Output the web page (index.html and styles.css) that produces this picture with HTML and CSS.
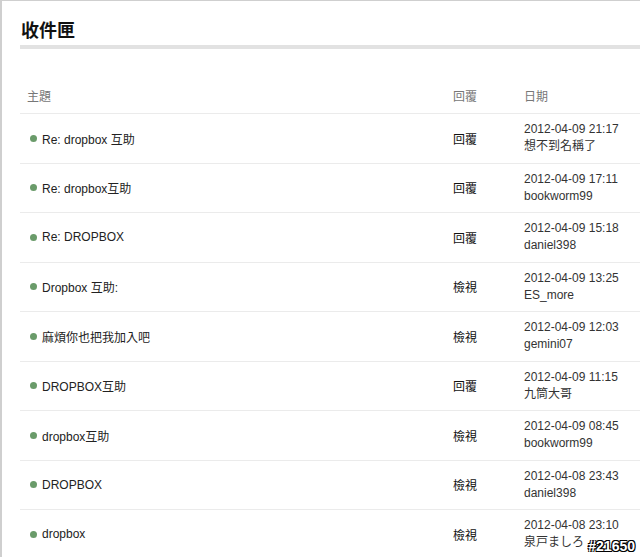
FILE: index.html
```html
<!DOCTYPE html>
<html>
<head>
<meta charset="utf-8">
<title>收件匣</title>
<link rel="stylesheet" href="styles.css">
</head>
<body>
<div class="page">
  <h1 class="title">收件匣</h1>

  <div class="inbox">
    <div class="row head">
      <div class="cell">主題</div>
      <div class="cell">回覆</div>
      <div class="cell">日期</div>
    </div>

    <div class="row">
      <div class="cell subject"><span class="dot"></span>Re: dropbox 互助</div>
      <div class="cell action">回覆</div>
      <div class="cell date">2012-04-09 21:17<br>想不到名稱了</div>
    </div>
    <div class="row">
      <div class="cell subject"><span class="dot"></span>Re: dropbox互助</div>
      <div class="cell action">回覆</div>
      <div class="cell date">2012-04-09 17:11<br>bookworm99</div>
    </div>
    <div class="row">
      <div class="cell subject"><span class="dot"></span>Re: DROPBOX</div>
      <div class="cell action">回覆</div>
      <div class="cell date">2012-04-09 15:18<br>daniel398</div>
    </div>
    <div class="row">
      <div class="cell subject"><span class="dot"></span>Dropbox 互助:</div>
      <div class="cell action">檢視</div>
      <div class="cell date">2012-04-09 13:25<br>ES_more</div>
    </div>
    <div class="row">
      <div class="cell subject"><span class="dot"></span>麻煩你也把我加入吧</div>
      <div class="cell action">檢視</div>
      <div class="cell date">2012-04-09 12:03<br>gemini07</div>
    </div>
    <div class="row">
      <div class="cell subject"><span class="dot"></span>DROPBOX互助</div>
      <div class="cell action">回覆</div>
      <div class="cell date">2012-04-09 11:15<br>九筒大哥</div>
    </div>
    <div class="row">
      <div class="cell subject"><span class="dot"></span>dropbox互助</div>
      <div class="cell action">檢視</div>
      <div class="cell date">2012-04-09 08:45<br>bookworm99</div>
    </div>
    <div class="row">
      <div class="cell subject"><span class="dot"></span>DROPBOX</div>
      <div class="cell action">檢視</div>
      <div class="cell date">2012-04-08 23:43<br>daniel398</div>
    </div>
    <div class="row">
      <div class="cell subject"><span class="dot"></span>dropbox</div>
      <div class="cell action">檢視</div>
      <div class="cell date">2012-04-08 23:10<br>泉戸ましろ</div>
    </div>
  </div>

  <div class="mark">#21650</div>
</div>
</body>
</html>
```

FILE: styles.css
```css
body {
  margin: 0;
  padding: 0;
  background-color: #fff;
  font-family: "Liberation Sans", Arial, "Noto Sans CJK TC", sans-serif;
  font-size: 12px;
  color: #333;
}

.page {
  position: relative;
  height: 556px;
  overflow: hidden;
  border-top: 1px solid #cfcfcf;
  border-left: 2px solid #cfcfcf;
  padding-left: 18px;
}

.title {
  margin: 0;
  padding: 18px 0 2px 1px;
  font-size: 18px;
  line-height: 24px;
  font-weight: bold;
  color: #111;
  border-bottom: 4px solid #e2e2e2;
}

.inbox {
  margin-top: 28px;
}

.row {
  display: grid;
  grid-template-columns: 426px 71px 1fr;
  align-items: center;
  height: 49.5px;
  box-sizing: border-box;
  border-bottom: 1px solid #ebebeb;
}

.row.head {
  height: 37px;
  color: #777;
}

.cell {
  padding-left: 7px;
  white-space: nowrap;
}

.subject {
  display: flex;
  align-items: center;
  padding-left: 10px;
  color: #222;
}

.dot {
  display: inline-block;
  width: 7px;
  height: 7px;
  border-radius: 50%;
  background-color: #6a9b6a;
  margin-right: 5px;
}

.action {
  color: #111;
}

.date {
  line-height: 17px;
}

.mark {
  position: absolute;
  right: 5px;
  bottom: 3px;
  font-size: 14px;
  font-weight: bold;
  color: #fff;
  text-shadow: -1px -1px 0 #000, 1px -1px 0 #000, -1px 1px 0 #000, 1px 1px 0 #000;
}
```
